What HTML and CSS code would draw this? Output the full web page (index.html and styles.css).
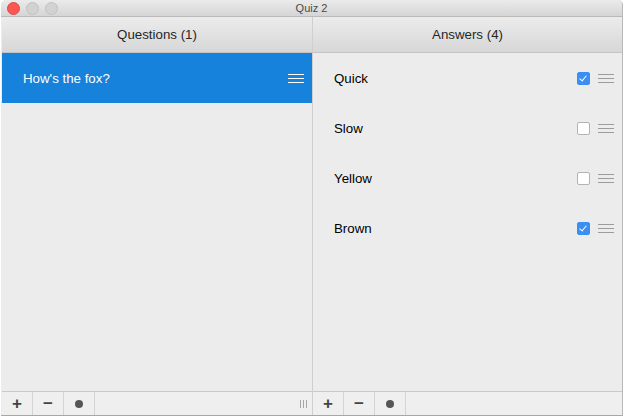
FILE: index.html
```html
<!DOCTYPE html>
<html>

<head>
    <title>Quiz 2</title>
    <link rel="stylesheet" href="styles.css">
</head>

<body>
    <div class="window">
        <div class="titlebar">
            <div class="lights">
                <span class="light red"></span>
                <span class="light"></span>
                <span class="light"></span>
            </div>
            <div class="title">Quiz 2</div>
        </div>

        <div class="panels">
            <div class="panel left">
                <div class="header">Questions (1)</div>
                <div class="list">
                    <div class="row selected">
                        <span class="label">How's the fox?</span>
                        <span class="handle"><i></i><i></i><i></i></span>
                    </div>
                </div>
                <div class="toolbar">
                    <button class="tool">+</button>
                    <button class="tool">&minus;</button>
                    <button class="tool"><span class="dot"></span></button>
                    <span class="grip"><i></i><i></i><i></i></span>
                </div>
            </div>

            <div class="panel right">
                <div class="header">Answers (4)</div>
                <div class="list">
                    <div class="row">
                        <span class="label">Quick</span>
                        <span class="check on"></span>
                        <span class="handle"><i></i><i></i><i></i></span>
                    </div>
                    <div class="row">
                        <span class="label">Slow</span>
                        <span class="check"></span>
                        <span class="handle"><i></i><i></i><i></i></span>
                    </div>
                    <div class="row">
                        <span class="label">Yellow</span>
                        <span class="check"></span>
                        <span class="handle"><i></i><i></i><i></i></span>
                    </div>
                    <div class="row">
                        <span class="label">Brown</span>
                        <span class="check on"></span>
                        <span class="handle"><i></i><i></i><i></i></span>
                    </div>
                </div>
                <div class="toolbar">
                    <button class="tool">+</button>
                    <button class="tool">&minus;</button>
                    <button class="tool"><span class="dot"></span></button>
                </div>
            </div>
        </div>
    </div>
</body>

</html>
```

FILE: styles.css
```css
html, body {
    margin: 0;
    padding: 0;
    background: #ffffff;
}

body {
    font-family: "Liberation Sans", Arial, sans-serif;
    font-size: 13px;
    color: #000;
}

.window {
    width: 622px;
    height: 416px;
    margin-left: 1px;
    border-right: 1px solid #b8b8b8;
    border-bottom: 1px solid #a8a8a8;
    border-radius: 5px 5px 0 0;
    background: #ececec;
    display: flex;
    flex-direction: column;
    overflow: hidden;
    box-sizing: border-box;
}

.titlebar {
    height: 16px;
    flex: none;
    position: relative;
    background: linear-gradient(#ebebeb, #d5d5d5);
    border-bottom: 1px solid #b9b9b9;
}

.lights {
    position: absolute;
    left: 6px;
    top: 2px;
    display: flex;
    gap: 6px;
}

.light {
    width: 11px;
    height: 11px;
    border-radius: 50%;
    background: #d2d2d2;
    border: 0.5px solid #c0c0c0;
}

.light.red {
    background: #fc5753;
    border-color: #df4744;
}

.title {
    text-align: center;
    font-size: 11px;
    line-height: 16px;
    color: #4a4a4a;
}

.panels {
    flex: 1;
    display: flex;
    min-height: 0;
}

.panel {
    display: flex;
    flex-direction: column;
}

.panel.left {
    width: 310px;
    margin-left: 1px;
    border-right: 1px solid #cfcfcf;
}

.panel.right {
    flex: 1;
}

.header {
    height: 35px;
    flex: none;
    line-height: 35px;
    text-align: center;
    font-size: 13.3px;
    color: #262626;
    background: linear-gradient(#ececec, #d7d7d7);
    border-bottom: 1px solid #c4c4c4;
}

.list {
    flex: 1;
}

.row {
    height: 50px;
    display: flex;
    align-items: center;
    padding: 0 8px 0 21px;
    font-size: 13.3px;
}

.row .label {
    flex: 1;
}

.row.selected {
    background: #1782db;
    color: #fff;
}

.handle {
    width: 16px;
    display: flex;
    flex-direction: column;
    gap: 3px;
}

.handle i {
    display: block;
    height: 1px;
    background: #9c9c9c;
}

.row.selected .handle i {
    background: #fff;
}

.check {
    width: 11px;
    height: 11px;
    border: 1px solid #b3b3b3;
    border-radius: 2px;
    background: #fff;
    margin-right: 8px;
    position: relative;
}

.check.on {
    background: #3b8ff2;
    border-color: #3b8ff2;
}

.check.on::after {
    content: "";
    position: absolute;
    left: 3px;
    top: 1px;
    width: 3px;
    height: 6px;
    border: solid #fff;
    border-width: 0 1.5px 1.5px 0;
    transform: rotate(40deg);
}

.toolbar {
    height: 23px;
    flex: none;
    display: flex;
    border-top: 1px solid #c9c9c9;
    background: #efefef;
}

.tool {
    width: 31px;
    height: 23px;
    padding: 0;
    border: none;
    border-right: 1px solid #d4d4d4;
    background: transparent;
    font-family: "Liberation Sans", Arial, sans-serif;
    font-size: 17px;
    font-weight: bold;
    color: #444;
    line-height: 22px;
    display: flex;
    align-items: center;
    justify-content: center;
}

.dot {
    width: 8px;
    height: 8px;
    border-radius: 50%;
    background: #555;
}

.grip {
    margin-left: auto;
    margin-right: 5px;
    align-self: center;
    display: flex;
    gap: 2px;
}

.grip i {
    display: block;
    width: 1px;
    height: 8px;
    background: #a5a5a5;
}
```
